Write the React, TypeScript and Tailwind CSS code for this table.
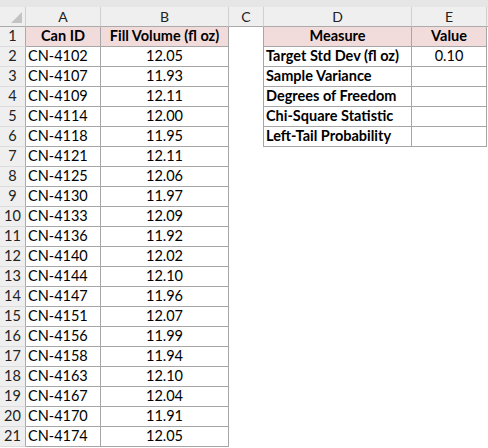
const cans: [string, string][] = [
  ["CN-4102", "12.05"],
  ["CN-4107", "11.93"],
  ["CN-4109", "12.11"],
  ["CN-4114", "12.00"],
  ["CN-4118", "11.95"],
  ["CN-4121", "12.11"],
  ["CN-4125", "12.06"],
  ["CN-4130", "11.97"],
  ["CN-4133", "12.09"],
  ["CN-4136", "11.92"],
  ["CN-4140", "12.02"],
  ["CN-4144", "12.10"],
  ["CN-4147", "11.96"],
  ["CN-4151", "12.07"],
  ["CN-4156", "11.99"],
  ["CN-4158", "11.94"],
  ["CN-4163", "12.10"],
  ["CN-4167", "12.04"],
  ["CN-4170", "11.91"],
  ["CN-4174", "12.05"],
];

const measures: [string, string][] = [
  ["Target Std Dev (fl oz)", "0.10"],
  ["Sample Variance", ""],
  ["Degrees of Freedom", ""],
  ["Chi-Square Statistic", ""],
  ["Left-Tail Probability", ""],
];

const cell = "h-5 border-b border-r border-[#a6a6a6] leading-[18px] whitespace-nowrap overflow-hidden";

function ColHead({ label, w }: { label: string; w: string }) {
  return (
    <div className={`${w} h-5 shrink-0 border-b border-r border-b-[#ababab] border-r-[#d0d0d0] text-center text-[14px] leading-[19px] text-[#222]`}>
      {label}
    </div>
  );
}

export default function App() {
  const rows = Array.from({ length: 21 }, (_, i) => i + 1);

  return (
    <div className="w-[488px] h-[448px] bg-white overflow-hidden text-black" style={{ fontFamily: "Lato, 'Noto Sans', sans-serif" }}>
      <div className="h-[7px] bg-[#e6e6e6]" />
      <div className="flex bg-[#efefef]">
        <div className="w-[26px] h-5 shrink-0 border-b border-r border-b-[#ababab] border-r-[#d0d0d0] flex items-end justify-end pr-[3px] pb-[3px]">
          <svg width="11" height="11" viewBox="0 0 11 11">
            <polygon points="11,0 11,11 0,11" fill="#c3c3c3" />
          </svg>
        </div>
        <ColHead label="A" w="w-[75px]" />
        <ColHead label="B" w="w-[128px]" />
        <ColHead label="C" w="w-[35px]" />
        <ColHead label="D" w="w-[148px]" />
        <ColHead label="E" w="w-[75px]" />
        <div className="flex-1 h-5 border-b border-[#ababab]" />
      </div>

      {rows.map((r) => {
        const isHead = r === 1;
        const can = cans[r - 2];
        const m = r >= 2 && r <= 6 ? measures[r - 2] : null;
        const bg = isHead ? "bg-[#f2dcdb] font-bold" : "";
        return (
          <div key={r} className="flex text-[14.5px]">
            <div className="w-[26px] h-5 shrink-0 bg-[#efefef] border-b border-r border-b-[#dcdcdc] border-r-[#ababab] text-center leading-[18px] text-[#222]">
              {r}
            </div>
            <div className={`w-[75px] shrink-0 ${cell} ${bg} ${isHead ? "text-center" : "pl-[2px]"}`}>
              {isHead ? "Can ID" : can[0]}
            </div>
            <div className={`w-[128px] shrink-0 ${cell} ${bg} text-center`}>
              {isHead ? "Fill Volume (fl oz)" : can[1]}
            </div>
            <div className={`w-[35px] h-5 shrink-0 ${r <= 6 ? "border-r border-[#a6a6a6]" : ""}`} />
            {r <= 6 && (
              <>
                <div className={`w-[148px] shrink-0 ${cell} font-bold ${isHead ? "bg-[#f2dcdb] text-center" : "pl-[2px]"}`}>
                  {isHead ? "Measure" : m![0]}
                </div>
                <div className={`w-[75px] shrink-0 ${cell} ${bg} text-center`}>
                  {isHead ? "Value" : m![1]}
                </div>
              </>
            )}
          </div>
        );
      })}
    </div>
  );
}
